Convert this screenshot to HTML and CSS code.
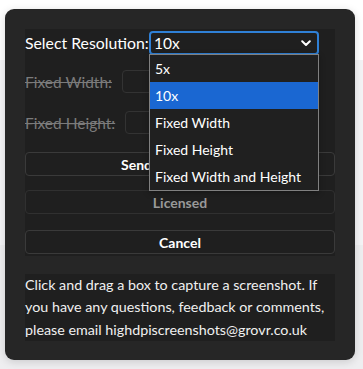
FILE: index.html
```html
<!DOCTYPE html>
<html lang="en">
<head>
  <meta charset="UTF-8" />
  <title>HighDPI Screenshots</title>
  <link rel="stylesheet" href="styles.css">
</head>
<body>
  <div class="panel">
    <div class="form">
      <div class="row row-res">
        <label>Select Resolution:</label>
        <div class="select">
          <span>10x</span>
          <svg class="chevron" width="10" height="7" viewBox="0 0 10 7"><path d="M1.2 1.3 L5 5 L8.8 1.3" fill="none" stroke="#fff" stroke-width="2" stroke-linecap="round" stroke-linejoin="round"/></svg>
        </div>
        <ul class="options">
          <li>5x</li>
          <li class="active">10x</li>
          <li>Fixed Width</li>
          <li>Fixed Height</li>
          <li>Fixed Width and Height</li>
        </ul>
      </div>
      <div class="row row-width">
        <label class="off">Fixed Width:</label>
        <input type="text" disabled />
      </div>
      <div class="row row-height">
        <label class="off">Fixed Height:</label>
        <input type="text" disabled />
      </div>
      <button class="btn btn-send"><span class="send-label">Send</span></button>
      <button class="btn btn-licensed" disabled>Licensed</button>
      <button class="btn btn-cancel">Cancel</button>
    </div>
    <p class="info">Click and drag a box to capture a screenshot. If you have any questions, feedback or comments, please email highdpiscreenshots@grovr.co.uk</p>
  </div>
</body>
</html>
```

FILE: styles.css
```css
:root {
  --panel-bg: #262626;
  --form-bg: #1f1f1f;
  --border: #3a3a3a;
  --blue: #1a67d2;
  --focus: #2f80d6;
}

html, body {
  margin: 0;
  height: 369px;
  overflow: hidden;
}

body {
  font-family: 'Lato', 'Open Sans', sans-serif;
  color: #fff;
  background: linear-gradient(to bottom, #ffffff 0, #ffffff 60px, #f4f4f6 60px, #f4f4f6 245px, #eeeef0 245px);
  padding: 9px 0 0 5px;
  box-sizing: border-box;
}

.panel {
  width: 310px;
  padding: 20px 20px 19px;
  background: var(--panel-bg);
  border-radius: 9px;
  box-shadow: 0 2px 8px rgba(0,0,0,0.15);
}

.form {
  background: var(--form-bg);
  padding-bottom: 2px;
}

.row {
  display: flex;
  align-items: center;
  font-size: 15.5px;
  white-space: nowrap;
}

.row label {
  flex-shrink: 0;
}

.row-res {
  position: relative;
  height: 27px;
}

.row-res label {
  width: 124px;
  font-size: 15.8px;
}

.select {
  box-sizing: border-box;
  flex-shrink: 0;
  width: 170px;
  height: 24px;
  border: 2px solid var(--focus);
  border-radius: 4px;
  display: flex;
  align-items: center;
  justify-content: space-between;
  padding: 0 6px 0 3px;
  font-size: 15.5px;
}

.chevron {
  margin-top: 1px;
}

.options {
  position: absolute;
  left: 124px;
  top: 25px;
  width: 168px;
  margin: 0;
  padding: 0;
  list-style: none;
  background: #202020;
  border: 1px solid #808080;
  z-index: 5;
  box-shadow: 0 2px 6px rgba(0,0,0,0.3);
}

.options li {
  height: 27px;
  line-height: 27px;
  padding-left: 5px;
  font-size: 14px;
}

.options li.active {
  background: var(--blue);
}

.row-width {
  margin-top: 14px;
  height: 23px;
}

.row-height {
  margin-top: 18px;
  height: 23px;
}

.off {
  color: #7b7b7b;
  text-decoration: line-through;
  margin-right: 10px;
}

.row input {
  box-sizing: border-box;
  width: 180px;
  height: 23px;
  background: var(--form-bg);
  border: 1px solid #333;
  border-radius: 4px;
}

.btn {
  display: block;
  box-sizing: border-box;
  width: 100%;
  height: 24px;
  background: var(--form-bg);
  border: 1px solid var(--border);
  border-radius: 4px;
  color: #fff;
  font-family: inherit;
  font-weight: bold;
  font-size: 14px;
  padding: 0;
}

/* only the start of the label shows from under the open list */
.btn-send {
  margin-top: 18px;
  text-align: left;
  padding-left: 95px;
}

.btn-licensed {
  margin-top: 14px;
  color: #999;
  border-color: #303030;
}

.btn-cancel {
  margin-top: 16px;
}

.info {
  margin: 18px 0 0;
  background: var(--form-bg);
  font-size: 14.3px;
  line-height: 22.3px;
  color: #f0f0f0;
}
```
